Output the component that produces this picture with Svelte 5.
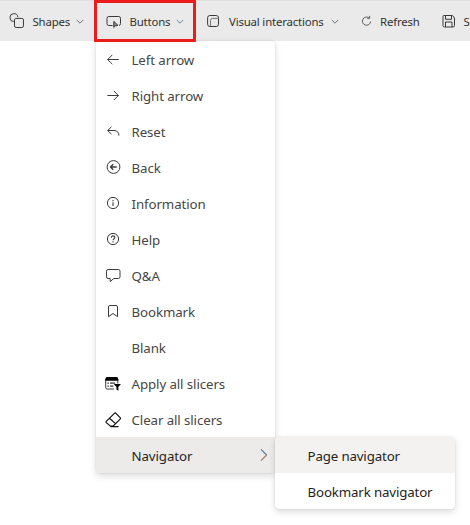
<script>
  const tools = [
    { icon: 'shapes', label: 'Shapes', width: 94, pad: 9, gap: 7.5, text: 37.5, chevron: true },
    { icon: 'button', label: 'Buttons', width: 102, pad: 12, gap: 7.5, text: 40.5, chevron: true, active: true },
    { icon: 'visual', label: 'Visual interactions', width: 157, pad: 10, gap: 7, text: 96, chevron: true },
    { icon: 'refresh', label: 'Refresh', width: 80, pad: 7, gap: 4, text: 41 },
    { icon: 'save', label: 'S', width: 37, pad: 8, gap: 6.5, text: 6.5 }
  ];

  const items = [
    { icon: 'left', label: 'Left arrow' },
    { icon: 'right', label: 'Right arrow' },
    { icon: 'reset', label: 'Reset' },
    { icon: 'back', label: 'Back' },
    { icon: 'info', label: 'Information' },
    { icon: 'help', label: 'Help' },
    { icon: 'chat', label: 'Q&A' },
    { icon: 'bookmark', label: 'Bookmark' },
    { icon: '', label: 'Blank' },
    { icon: 'apply', label: 'Apply all slicers' },
    { icon: 'clear', label: 'Clear all slicers' },
    { icon: '', label: 'Navigator', sub: true }
  ];
</script>

{#snippet glyph(name)}
  <svg class="icon" viewBox="0 0 16 16">
    {#if name === 'shapes'}
      <path d="M4.8 8.6A4 4 0 1 1 8.9 4.1M6.7 5.4h6.1a1.7 1.7 0 0 1 1.7 1.7v5.7a1.7 1.7 0 0 1-1.7 1.7H7.2a1.7 1.7 0 0 1-1.7-1.7V7.1a1.7 1.7 0 0 1 1.2-1.7Z" />
    {:else if name === 'button'}
      <path d="M6.6 12.5H2.8A1.8 1.8 0 0 1 1 10.7V5.3a1.8 1.8 0 0 1 1.8-1.8h9.9a1.8 1.8 0 0 1 1.8 1.8v5.4a1.8 1.8 0 0 1-1.5 1.8" />
      <path d="M7.8 8.4v6l1.7-1.6 2.5-.4Z" fill="#888" />
    {:else if name === 'visual'}
      <rect x="1.6" y="2.5" width="10.9" height="11" rx="2.3" />
      <path d="M4.5 13V7.4q0-2 2-2h6" stroke="#777" />
    {:else if name === 'refresh'}
      <path d="M8.9 4.8A4.1 4.1 0 1 0 10.6 8.5M9.6 2.9v2.4H7.2" stroke="#605e5c" />
    {:else if name === 'save'}
      <path d="M3 2.5h8.4L13.5 5v7.5a1.5 1.5 0 0 1-1.5 1.5H3.5A1.5 1.5 0 0 1 2 12.5v-9a1 1 0 0 1 1-1ZM4.5 2.5v3.8h6V2.5M4.5 14V9h6.5v5" />
    {:else if name === 'left'}
      <path d="M13.7 7.5H2.5M7.3 2.9 2.7 7.5l4.6 4.6" />
    {:else if name === 'right'}
      <path d="M2.4 7.5h11.2M8.8 2.9l4.6 4.6-4.6 4.6" />
    {:else if name === 'reset'}
      <path d="M6.4 2.9 2.6 6.5l3.8 3.6M2.8 6.5H9c3 0 4.9 1.7 4.9 5" />
    {:else if name === 'back'}
      <circle cx="8.5" cy="7" r="6.4" />
      <path d="M11.7 7H5.5M8.2 4.3 5.5 7l2.7 2.7" stroke-width="1.35" />
    {:else if name === 'info'}
      <circle cx="8" cy="7" r="5.6" />
      <path d="M8 6.3v3.6M8 4v1.2" stroke-width="1.1" />
    {:else if name === 'help'}
      <circle cx="8" cy="7" r="5.6" />
      <path d="M6.3 5.7c0-2.5 3.6-2.2 3.6-.2 0 1.3-1.8 1.2-1.8 2.8M8.1 9.2v1.2" stroke-width="1.1" />
    {:else if name === 'chat'}
      <path d="M3.1 1.5h10.2q1.7 0 1.7 1.7v5.6q0 1.7-1.7 1.7H8.8l-3.6 3v-3H3.1q-1.6 0-1.6-1.7V3.2q0-1.7 1.6-1.7Z" />
    {:else if name === 'bookmark'}
      <path d="M3.5 12.7V2.9q0-1.4 1.4-1.4h6.2q1.4 0 1.4 1.4v9.8L8 9.5Z" />
    {:else if name === 'apply'}
      <path d="M9 13H2.2Q.7 13 .7 11.5v-8Q.7 2 2.2 2h9.1q1.5 0 1.5 1.5v4" />
      <path d="M.4 4.8V3.2Q.4 1 2.4 1h8.8q2 0 2 2.2v1.6Z" fill="#000" stroke="none" />
      <path d="M2.4 7.2h1.5M5 7.2h5.2M2.4 10.2h1.5M5 10.2h3.4" stroke-width="1.3" />
      <path d="M8.8 8h7.1l-2.5 3.1v3.7l-2-1.2v-2.5Z" fill="#000" stroke="none" />
    {:else if name === 'clear'}
      <path d="m1.3 9.4 8.1-8q.8-.8 1.6 0l4.1 4.2q.7.8 0 1.6l-7.1 7H5.5l-4.2-3.6q-.5-.6 0-1.2ZM4.5 6.3l6 5.3M5.5 14.7h8" stroke="#111" stroke-width="1.2" />
    {/if}
  </svg>
{/snippet}

<main>
  <div class="toolbar">
    {#each tools as tool}
      <div class="tool" class:active={tool.active} style="width:{tool.width}px;padding-left:{tool.pad}px">
        {@render glyph(tool.icon)}
        <span class="caption" style="width:{tool.text}px;margin-left:{tool.gap}px">{tool.label}</span>
        {#if tool.chevron}
          <svg class="chevron" class:blue={tool.active} viewBox="0 0 8 6"><path d="m.8 1 3.2 3.2L7.2 1" /></svg>
        {/if}
      </div>
    {/each}
  </div>

  <div class="menu">
    {#each items as item}
      <div class="item" class:open={item.sub}>
        {@render glyph(item.icon)}
        <span>{item.label}</span>
        {#if item.sub}
          <svg class="arrow" viewBox="0 0 8 14">
            <path d="m1 1.3 5.6 5.7" />
            <path class="lower" d="M6.6 7 1 12.7" />
          </svg>
        {/if}
      </div>
    {/each}
  </div>

  <div class="submenu">
    <div class="subitem hover">Page navigator</div>
    <div class="subitem">Bookmark navigator</div>
  </div>
</main>

<style>
  :global(body) { margin: 0; background: #fff; }
  main {
    position: relative;
    width: 470px;
    height: 525px;
    overflow: hidden;
    font-family: "Segoe UI", "Noto Sans", "Open Sans", sans-serif;
    color: #323130;
  }
  .toolbar {
    display: flex;
    height: 41px;
    box-sizing: border-box;
    background: #eaeaea;
    border-top: 1px solid #e0e0e0;
  }
  .tool {
    display: flex;
    flex: none;
    align-items: center;
    box-sizing: border-box;
    height: 40px;
    position: relative;
    font-size: 11.4px;
    letter-spacing: -0.17px;
    white-space: nowrap;
  }
  .tool.active::after {
    content: "";
    position: absolute;
    inset: -1px 0 -1px;
    border: 3px solid #ec1c1c;
    z-index: 3;
  }
  .caption { flex: none; line-height: 16px; padding-top: 2px; }
  .icon {
    flex: none;
    width: 16px;
    height: 16px;
    fill: none;
    stroke: #3b3a39;
    stroke-width: 1;
  }
  .chevron {
    flex: none;
    width: 8px;
    height: 6px;
    margin: 1px 0 0 6px;
    fill: none;
    stroke: #68717c;
  }
  .chevron.blue { stroke: #5b88ad; }
  .menu {
    position: absolute;
    left: 96px;
    top: 41px;
    width: 179px;
    overflow: hidden;
    background: #fff;
    border-radius: 4px;
    z-index: 1;
  }
  .menu, .submenu {
    box-shadow: 0 3px 7px rgba(0, 0, 0, .14), 0 0 2px rgba(0, 0, 0, .12);
  }
  .item {
    display: flex;
    align-items: center;
    height: 36px;
    box-sizing: border-box;
    padding: 0 7px 0 9px;
    font-size: 13.3px;
    letter-spacing: -0.1px;
    color: #484644;
    white-space: nowrap;
  }
  .item .icon { margin-top: 2px; }
  .item span { margin: 1px 0 0 10.5px; }
  .item.open { background: #edebe9; color: #252423; }
  .arrow {
    width: 8px;
    height: 14px;
    margin: -1px 0 0 auto;
    fill: none;
    stroke: #56789c;
    stroke-width: 1.1;
  }
  .arrow .lower { stroke: #9a7b60; }
  .submenu {
    position: absolute;
    left: 275px;
    top: 437px;
    width: 180px;
    overflow: hidden;
    background: #fff;
    border-radius: 4px;
    z-index: 2;
  }
  .subitem {
    height: 36px;
    box-sizing: border-box;
    padding: 2px 0 0 32.5px;
    line-height: 34px;
    font-size: 13.3px;
    letter-spacing: -0.15px;
    color: #252423;
    white-space: nowrap;
  }
  .subitem.hover { background: #f3f2f1; }
</style>
